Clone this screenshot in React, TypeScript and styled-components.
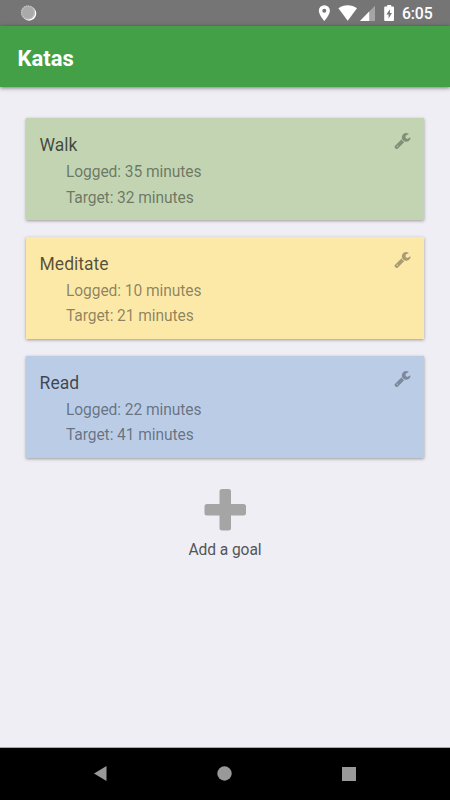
import React from 'react';
import styled, { createGlobalStyle } from 'styled-components';

const GlobalStyle = createGlobalStyle`
  * { box-sizing: border-box; }
  body { margin: 0; font-family: Roboto, sans-serif; background: #efeef4; }
  svg { display: block; }
`;

const Screen = styled.div`
  width: 450px;
  height: 800px;
  display: flex;
  flex-direction: column;
  background: #efeef4;
  overflow: hidden;
`;

const StatusBar = styled.div`
  height: 26px;
  flex: none;
  display: flex;
  justify-content: space-between;
  background: #757575;
  color: #fff;
  padding: 0 17px 0 20px;
`;

const StatusGroup = styled.div`
  display: flex;
`;

const Clock = styled.span`
  font-size: 15.8px;
  line-height: 28px;
  font-weight: 500;
  width: 31px;
  letter-spacing: -0.15px;
`;

const Header = styled.header`
  height: 61px;
  flex: none;
  display: flex;
  align-items: center;
  padding: 4px 17.5px 0;
  background: #43a047;
  box-shadow: 0 1px 4px rgba(0, 0, 0, 0.5);
`;

const Title = styled.h1`
  margin: 0;
  color: #fff;
  font-size: 22px;
  line-height: 28px;
  font-weight: 700;
`;

const Content = styled.main`
  flex: 1;
  display: flex;
  flex-direction: column;
  align-items: center;
  padding-top: 31px;
`;

const GoalList = styled.div`
  width: 398px;
  display: flex;
  flex-direction: column;
  gap: 16.8px;
`;

const Card = styled.section<{ $tone: string }>`
  height: 102px;
  display: flex;
  justify-content: space-between;
  padding: 14px 13px 0 13.6px;
  background: ${(p) => p.$tone};
  box-shadow: 0 1px 3px rgba(0, 0, 0, 0.36);
`;

const GoalName = styled.h2`
  margin: 0 0 2px;
  font-size: 17.5px;
  line-height: 26px;
  font-weight: 400;
  color: rgba(0, 0, 0, 0.67);
`;

const Stat = styled.div`
  padding-left: 26.4px;
  font-size: 15.6px;
  letter-spacing: -0.09px;
  line-height: 25.5px;
  color: rgba(0, 0, 0, 0.46);
`;

const AddGoal = styled.div`
  margin-top: 31px;
  display: flex;
  flex-direction: column;
  align-items: center;
`;

const AddLabel = styled.span`
  margin-top: 9px;
  font-size: 15.6px;
  letter-spacing: -0.09px;
  line-height: 20px;
  color: #555557;
`;

const NavBar = styled.nav`
  height: 53px;
  flex: none;
  display: flex;
  justify-content: space-between;
  padding: 18px 94px 0 93px;
  background: #000;
  border-top: 1px solid #aaa9ad;
`;

const goals = [
  { name: 'Walk', logged: 35, target: 32, tone: '#c2d4b2' },
  { name: 'Meditate', logged: 10, target: 21, tone: '#fce9a8' },
  { name: 'Read', logged: 22, target: 41, tone: '#bacce6' },
];

const Wrench = () => (
  <svg width="17" height="18" viewBox="0 0 17 18">
    <g transform="translate(0.3 14.8) scale(0.0098 -0.0098)" fill="#000" fillOpacity="0.33">
      <path
        fillRule="evenodd"
        d="M384 64q0 26-19 45t-45 19-45-19-19-45 19-45 45-19 45 19 19 45zM1028 484l-682-682q-37-37-90-37-52 0-91 37L59-90Q21-54 21 0q0 53 38 91l681 681q39-98 114.5-173.5T1028 484zM1662 919q0-39-23-106-47-134-164.5-217.5T1216 512q-185 0-316.5 131.5T768 960t131.5 316.5T1216 1408q58 0 121.5-16.5T1445 1345q16-11 16-28t-16-28l-293-169V896l193-107q5 3 79 48.5t135.5 81T1630 954q15 0 23.5-10t8.5-25z"
      />
    </g>
  </svg>
);

const Spinner = () => (
  <svg width="18" height="26" viewBox="20 0 18 26">
    <circle cx="29.1" cy="13.5" r="7.2" fill="#fff" />
    <circle cx="28" cy="12.5" r="7.1" fill="#aaa" />
    <circle cx="28" cy="12.5" r="6.4" fill="none" stroke="#c6c6c6" strokeWidth="1.2" strokeDasharray="1.1 1" />
  </svg>
);

const StatusIcons = () => (
  <svg width="86" height="26" viewBox="316 0 86 26" fill="#fff">
    <path
      fillRule="evenodd"
      d="M324.3 5.2a5.5 5.5 0 0 0-5.5 5.5c0 4.1 5.5 10.3 5.5 10.3s5.6-6.2 5.6-10.3a5.5 5.5 0 0 0-5.6-5.5zm0 3.6a2 2 0 1 1 0 4 2 2 0 0 1 0-4z"
    />
    <path d="M338.4 8.2C341 6.1 344.3 5.2 347.7 5.2s6.7.9 9.3 3L347.7 20.7z" />
    <path d="M375 5.7V21H360z" fillOpacity="0.35" />
    <path d="M369.2 11.6V21H360z" />
    <path
      fillRule="evenodd"
      d="M387.2 5h4v1.6h1.8q1 0 1 1V20q0 1-1 1h-7.8q-1 0-1-1V7.6q0-1 1-1h2zm2.7 4.3-3.5 5.2h2.2v4l3.3-5.5h-2z"
    />
  </svg>
);

const Plus = () => (
  <svg width="42" height="42" viewBox="0 0 42 42" fill="#a5a5a6">
    <path d="M18 0h6.5q2.5 0 2.5 2.5V15h12.5q2.5 0 2.5 2.5v6.5q0 2.5-2.5 2.5H27v12.5q0 2.5-2.5 2.5H18q-2.5 0-2.5-2.5V26.5H3Q.5 26.5.5 24v-6.5Q.5 15 3 15h12.5V2.5Q15.5 0 18 0z" />
  </svg>
);

export default function App() {
  return (
    <>
      <GlobalStyle />
      <Screen>
        <StatusBar>
          <Spinner />
          <StatusGroup>
            <StatusIcons />
            <Clock>6:05</Clock>
          </StatusGroup>
        </StatusBar>
        <Header>
          <Title>Katas</Title>
        </Header>
        <Content>
          <GoalList>
            {goals.map((goal) => (
              <Card key={goal.name} $tone={goal.tone}>
                <div>
                  <GoalName>{goal.name}</GoalName>
                  <Stat>Logged: {goal.logged} minutes</Stat>
                  <Stat>Target: {goal.target} minutes</Stat>
                </div>
                <Wrench />
              </Card>
            ))}
          </GoalList>
          <AddGoal>
            <Plus />
            <AddLabel>Add a goal</AddLabel>
          </AddGoal>
        </Content>
        <NavBar>
          <svg width="14" height="15" viewBox="0 0 14 15">
            <path d="M1 7.5 13.5 0v15z" fill="#999" />
          </svg>
          <svg width="16" height="15" viewBox="0 0 16 15">
            <circle cx="8.5" cy="7.5" r="7.2" fill="#999" />
          </svg>
          <svg width="15" height="15" viewBox="0 0 15 15">
            <path d="M1 1h14v14H1z" fill="#999" />
          </svg>
        </NavBar>
      </Screen>
    </>
  );
}
